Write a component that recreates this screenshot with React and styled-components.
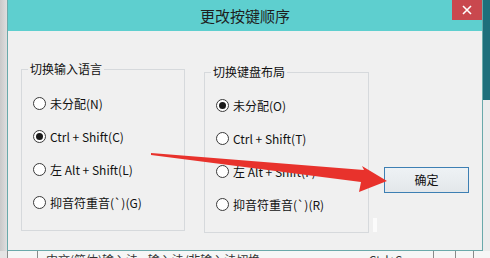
import React from "react";
import styled, { createGlobalStyle } from "styled-components";

const Global = createGlobalStyle`
  html, body {
    margin: 0;
    padding: 0;
    width: 490px;
    height: 258px;
    overflow: hidden;
    background: #e4e4e4;
  }
  * { box-sizing: border-box; }
`;

const FONT = `"Noto Sans CJK SC", "Noto Sans", sans-serif`;

const Screen = styled.div`
  position: relative;
  width: 490px;
  height: 258px;
  display: flex;
  flex-direction: column;
  font-family: ${FONT};
  overflow: hidden;
`;

const TopArea = styled.div`
  display: flex;
  height: 251px;
`;

const LeftEdge = styled.div`
  width: 7px;
  background: linear-gradient(90deg, #c9c9c9, #dedede);
`;

const SideStrip = styled.div`
  width: 7px;
  display: flex;
  flex-direction: column;
  background: #ececec;
  &::before {
    content: "";
    height: 100px;
    background: #1e6f7b;
  }
`;

// 대화상자 본체
const Dialog = styled.div`
  width: 476px;
  display: flex;
  flex-direction: column;
  border-left: 1px solid #6aa9aa;
  border-right: 1px solid #6aa9aa;
  border-bottom: 1px solid #6aa9aa;
  background: #f0f0f0;
`;

const TitleBar = styled.div`
  height: 31px;
  background: #5ecfcf;
  display: grid;
  grid-template-columns: 1fr auto 1fr;
`;

const Title = styled.div`
  grid-column: 2;
  font-size: 15px;
  line-height: 31px;
  color: #1f1f1f;
`;

const CloseButton = styled.div`
  grid-column: 3;
  justify-self: end;
  width: 30px;
  height: 20px;
  background: #c9484e;
  display: flex;
  align-items: center;
  justify-content: center;
`;

const Body = styled.div`
  flex: 1;
  display: flex;
  align-items: flex-start;
  padding: 0 0 0 13px;
`;

const Group = styled.fieldset`
  margin: ${(p) => p.$top}px ${(p) => p.$gap || 0}px 0 0;
  width: ${(p) => p.$width}px;
  height: ${(p) => p.$height}px;
  border: 1px solid #d6d9dc;
  border-radius: 0;
  padding: 0;
`;

const Legend = styled.legend`
  font-size: 12px;
  line-height: 16px;
  color: #111;
  padding: 0 2px;
  margin-left: 6px;
`;

const RadioList = styled.div`
  display: flex;
  flex-direction: column;
  padding: ${(p) => p.$pt}px 0 0 11px;
`;

const RadioRow = styled.div`
  height: 33px;
  display: flex;
  align-items: center;
  gap: 4px;
  font-size: 12px;
  color: #111;
`;

const Circle = styled.span`
  width: 13px;
  height: 13px;
  border-radius: 50%;
  border: 1px solid #3a3a3a;
  background: #fff;
  display: flex;
  align-items: center;
  justify-content: center;
  &::after {
    content: "";
    width: 7px;
    height: 7px;
    border-radius: 50%;
    background: ${(p) => (p.$on ? "#1a1a1a" : "transparent")};
  }
`;

const ButtonCol = styled.div`
  padding-top: 136px;
  display: flex;
  flex-direction: column;
  gap: 25px;
`;

const OkButton = styled.div`
  width: 85px;
  height: 26px;
  border: 1px solid #3d7fb3;
  background: linear-gradient(#eef2f5, #e3e7ea);
  font-size: 12px;
  line-height: 24px;
  text-align: center;
  color: #111;
`;

const Ghost = styled.div`
  width: 4px;
  height: 14px;
  margin-left: -11px;
  background: #fbfbfb;
`;

// 뒤쪽 목록 줄
const ListRow = styled.div`
  height: 7px;
  margin-left: 7px;
  display: grid;
  grid-template-columns: 30px 396px 22px 18px 1fr;
  background: #f6f6f6;
  overflow: hidden;
`;

const Cell = styled.div`
  border-left: 1px solid #8a8a8a;
  font-size: 12px;
  line-height: 12px;
  color: #333;
  white-space: nowrap;
  padding-left: ${(p) => p.$pl || 0}px;
  padding-top: 3px;
  display: flex;
  justify-content: space-between;
  padding-right: 4px;
`;

const ArrowLayer = styled.svg`
  position: absolute;
  left: 0;
  top: 0;
  pointer-events: none;
`;

function Radio({ label, on }) {
  return (
    <RadioRow>
      <Circle $on={on} />
      <span>{label}</span>
    </RadioRow>
  );
}

export default function App() {
  return (
    <>
      <Global />
      <Screen>
        <TopArea>
          <LeftEdge />
          <Dialog>
            <TitleBar>
              <Title>更改按键顺序</Title>
              <CloseButton>
                <svg width="10" height="10" viewBox="0 0 10 10">
                  <path d="M1 1 L9 9 M9 1 L1 9" stroke="#fff" strokeWidth="1.6" />
                </svg>
              </CloseButton>
            </TitleBar>
            <Body>
              <Group $top={30} $width={164} $height={170} $gap={19}>
                <Legend>切换输入语言</Legend>
                <RadioList $pt={10}>
                  <Radio label="未分配(N)" />
                  <Radio label="Ctrl + Shift(C)" on />
                  <Radio label="左 Alt + Shift(L)" />
                  <Radio label="抑音符重音(`)(G)" />
                </RadioList>
              </Group>
              <Group $top={33} $width={165} $height={169} $gap={15}>
                <Legend>切换键盘布局</Legend>
                <RadioList $pt={9}>
                  <Radio label="未分配(O)" on />
                  <Radio label="Ctrl + Shift(T)" />
                  <Radio label="左 Alt + Shift(F)" />
                  <Radio label="抑音符重音(`)(R)" />
                </RadioList>
              </Group>
              <ButtonCol>
                <OkButton>确定</OkButton>
                <Ghost />
              </ButtonCol>
            </Body>
          </Dialog>
          <SideStrip />
        </TopArea>
        <ListRow>
          <Cell />
          <Cell $pl={8}>
            <span>中文(简体)输入法 - 输入法/非输入法切换</span>
            <span>Ctrl+Space</span>
          </Cell>
          <Cell />
          <Cell />
          <Cell />
        </ListRow>
        <ArrowLayer width="490" height="258" viewBox="0 0 490 258">
          <path
            d="M151 153 L364 170 L362 166 L387 181 L359 192 L361 182 L151 155 Z"
            fill="#e8322c"
          />
        </ArrowLayer>
      </Screen>
    </>
  );
}
